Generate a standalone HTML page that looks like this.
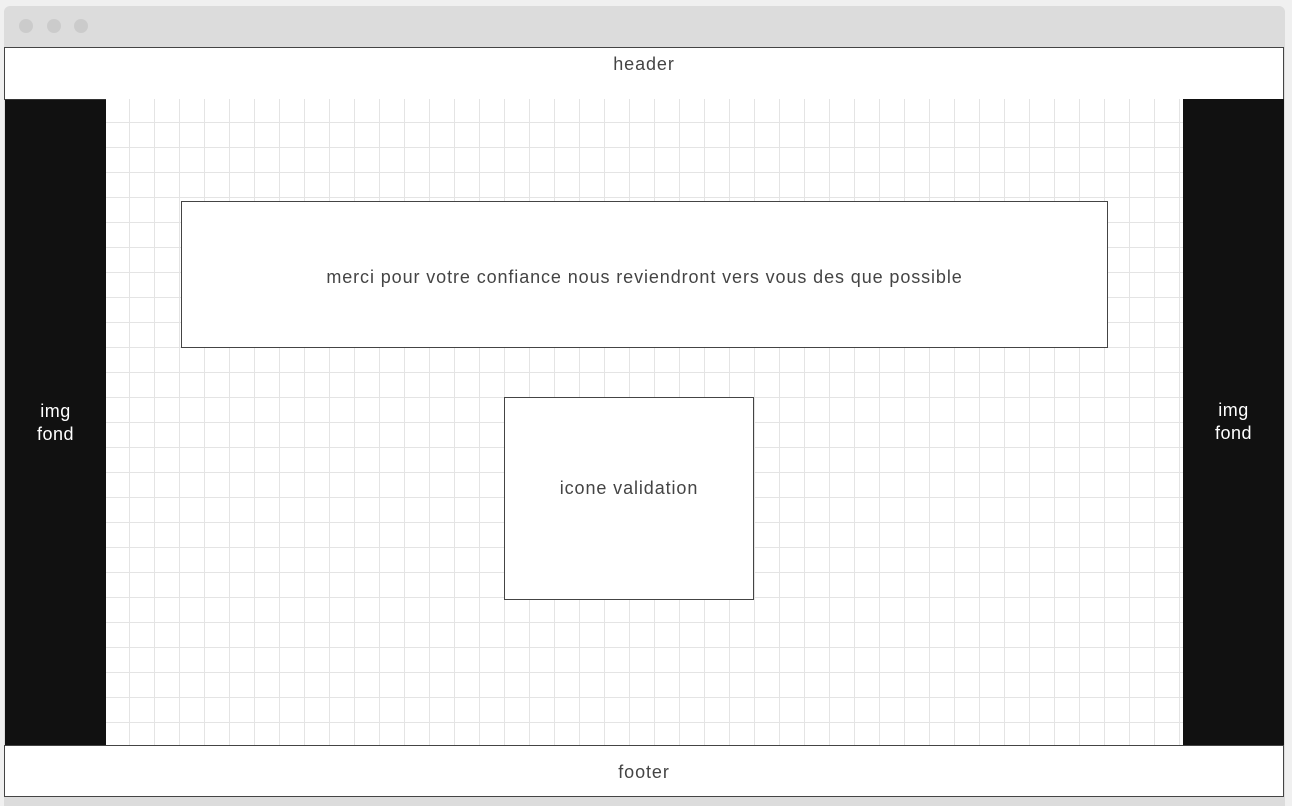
<!DOCTYPE html>
<html><head><style>
body{margin:0;width:1292px;height:798px;background:#f0f0f0;position:relative;overflow:hidden;font-family:"Liberation Sans",sans-serif;}
.win{position:absolute;left:4px;top:6px;width:1281px;height:800px;background:#dcdcdc;border-radius:6px 6px 0 0;}
.dot{position:absolute;top:19px;width:14px;height:14px;border-radius:50%;background:#cbcbcb;}
.hdr{position:absolute;left:4px;top:47px;width:1278px;height:51px;background:#fff;border:1px solid #444;font-size:18px;letter-spacing:0.9px;color:#444;text-align:center;line-height:32px;}
.main{position:absolute;left:5px;top:99px;width:1278px;height:646px;background-color:#fff;
background-image:linear-gradient(to right,#e4e4e4 1px,transparent 1px),linear-gradient(to bottom,#e4e4e4 1px,transparent 1px);
background-size:25px 25px;background-position:-1px -2px;}
.side{position:absolute;top:99px;width:101px;height:646px;background:#111;color:#fff;font-size:18px;letter-spacing:0.5px;text-align:center;}
.side span{position:absolute;left:0;right:0;top:300px;line-height:23px;}
.box{position:absolute;background:#fff;border:1px solid #444;color:#444;font-size:18px;letter-spacing:0.9px;text-align:center;}
.ftr{position:absolute;left:4px;top:745px;width:1278px;height:50px;background:#fff;border:1px solid #444;font-size:18px;letter-spacing:0.9px;color:#444;text-align:center;line-height:52px;}
</style></head><body>
<div class="win"></div>
<div class="dot" style="left:19px"></div><div class="dot" style="left:47px"></div><div class="dot" style="left:74px"></div>
<div class="hdr">header</div>
<div class="main"></div>
<div class="side" style="left:5px;border-top:1px solid #333"><span>img<br>fond</span></div>
<div class="side" style="left:1183px"><span>img<br>fond</span></div>
<div class="box" style="left:181px;top:201px;width:925px;height:145px;line-height:150px">merci pour votre confiance nous reviendront vers vous des que possible</div>
<div class="box" style="left:504px;top:397px;width:248px;height:201px;line-height:180px">icone validation</div>
<div class="ftr">footer</div>
</body></html>
